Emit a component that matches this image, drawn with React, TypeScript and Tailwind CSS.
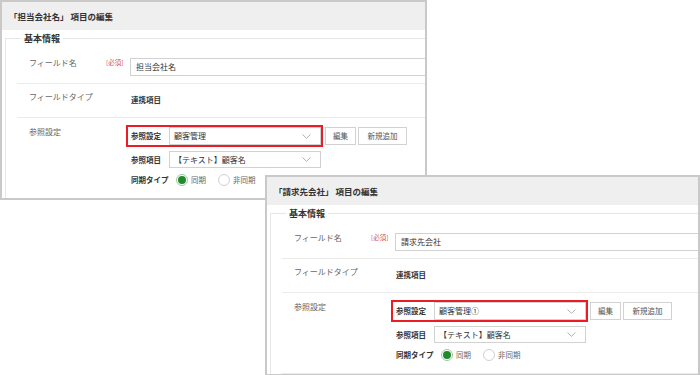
import React from 'react';

const font = { fontFamily: '"Noto Sans CJK JP", "Noto Sans", sans-serif' };

function Chevron() {
  return (
    <svg width="9" height="5" viewBox="0 0 9 5" className="flex-none">
      <path d="M0.5 0.5 L4.5 4.3 L8.5 0.5" fill="none" stroke="#a8a8a8" strokeWidth="0.9" />
    </svg>
  );
}

function Select({ value, height }: { value: string; height: string }) {
  return (
    <div
      className={`w-[152px] ${height} flex-none border border-[#d2d2d2] bg-white flex items-center justify-between pl-[4px] pr-[9px] text-[8px] text-[#333]`}
    >
      <span>{value}</span>
      <Chevron />
    </div>
  );
}

function Radio({ checked, label }: { checked: boolean; label: string }) {
  return (
    <div className="flex items-center gap-[3px]">
      {checked ? (
        <span className="w-[12px] h-[12px] rounded-full border border-[#9ccaa2] bg-white flex items-center justify-center">
          <span className="w-[8px] h-[8px] rounded-full bg-[#22892f]" />
        </span>
      ) : (
        <span className="w-[12px] h-[12px] rounded-full border border-[#d0d0d0] bg-white" />
      )}
      <span className="text-[7.5px] text-[#666]">{label}</span>
    </div>
  );
}

function EditPanel({
  title,
  fieldName,
  refName,
  className,
}: {
  title: string;
  fieldName: string;
  refName: string;
  className: string;
}) {
  return (
    <div className={`absolute border-2 border-[#c9c9c9] bg-white overflow-hidden ${className}`}>
      {/* ヘッダー */}
      <div className="h-[28px] bg-[#efefef] flex items-center pl-[7px] text-[8.5px] font-bold text-[#333]">
        {title}
      </div>

      <fieldset className="ml-[3px] mt-[2px] border-t border-l border-r-0 border-b-0 border-[#e6e6e6] pl-[11px]">
        <legend className="ml-[4px] px-[3px] text-[9px] leading-[13px] font-bold text-[#333]">
          基本情報
        </legend>

        {/* フィールド名 */}
        <div className="h-[39px] flex items-start pl-[12px] border-b border-[#ebebeb]">
          <div className="w-[77px] mt-[12px] text-[8px] leading-[12px] text-[#666]">フィールド名</div>
          <div className="w-[24px] mt-[11px] text-[6.5px] leading-[12px] text-[#d9534f]">[必須]</div>
          <div className="w-[400px] flex-none h-[18px] mt-[13px] border border-[#d2d2d2] flex items-center pl-[5px] text-[8px] text-[#333]">
            {fieldName}
          </div>
        </div>

        {/* フィールドタイプ */}
        <div className="h-[34px] flex items-start pl-[12px] border-b border-[#ebebeb]">
          <div className="w-[78px] mt-[7px] text-[8px] leading-[12px] text-[#666]">フィールドタイプ</div>
          <div className="w-[24px]" />
          <div className="mt-[10px] text-[7.5px] leading-[12px] font-bold text-[#333]">連携項目</div>
        </div>

        {/* 参照設定 */}
        <div className="h-[81px] flex items-start pl-[12px] border-b border-[#ebebeb]">
          <div className="w-[77px] mt-[8px] text-[8px] leading-[12px] text-[#666]">参照設定</div>
          <div className="w-[20px]" />
          <div className="flex flex-col">
            <div className="mt-[7px] flex items-center">
              <div className="w-[197px] h-[22px] border-2 border-[#ec1c24] pl-[3px] flex items-center">
                <span className="w-[38px] text-[7.5px] font-bold text-[#333]">参照設定</span>
                <Select value={refName} height="h-[18px]" />
              </div>
              <button className="ml-[2px] w-[31px] h-[18px] border border-[#d2d2d2] bg-white text-[7.5px] text-[#555]">
                編集
              </button>
              <button className="ml-[2px] w-[49px] h-[18px] border border-[#d2d2d2] bg-white text-[7.5px] text-[#555]">
                新規追加
              </button>
            </div>
            <div className="mt-[4px] pl-[5px] flex items-center">
              <span className="w-[38px] text-[7.5px] font-bold text-[#333]">参照項目</span>
              <Select value="【テキスト】顧客名" height="h-[17px]" />
            </div>
            <div className="mt-[5px] pl-[5px] flex items-center h-[14px]">
              <span className="w-[45px] text-[7.5px] font-bold text-[#333]">同期タイプ</span>
              <div className="flex items-center gap-[12px]">
                <Radio checked label="同期" />
                <Radio checked={false} label="非同期" />
              </div>
            </div>
          </div>
        </div>
      </fieldset>
    </div>
  );
}

export default function App() {
  return (
    <div className="relative w-[700px] h-[375px] bg-white overflow-hidden" style={font}>
      <EditPanel
        title="「担当会社名」 項目の編集"
        fieldName="担当会社名"
        refName="顧客管理"
        className="left-0 top-0 w-[427px] h-[200px]"
      />
      <EditPanel
        title="「請求先会社」 項目の編集"
        fieldName="請求先会社"
        refName="顧客管理①"
        className="left-[265px] top-[175px] w-[435px] h-[201px]"
      />
    </div>
  );
}
